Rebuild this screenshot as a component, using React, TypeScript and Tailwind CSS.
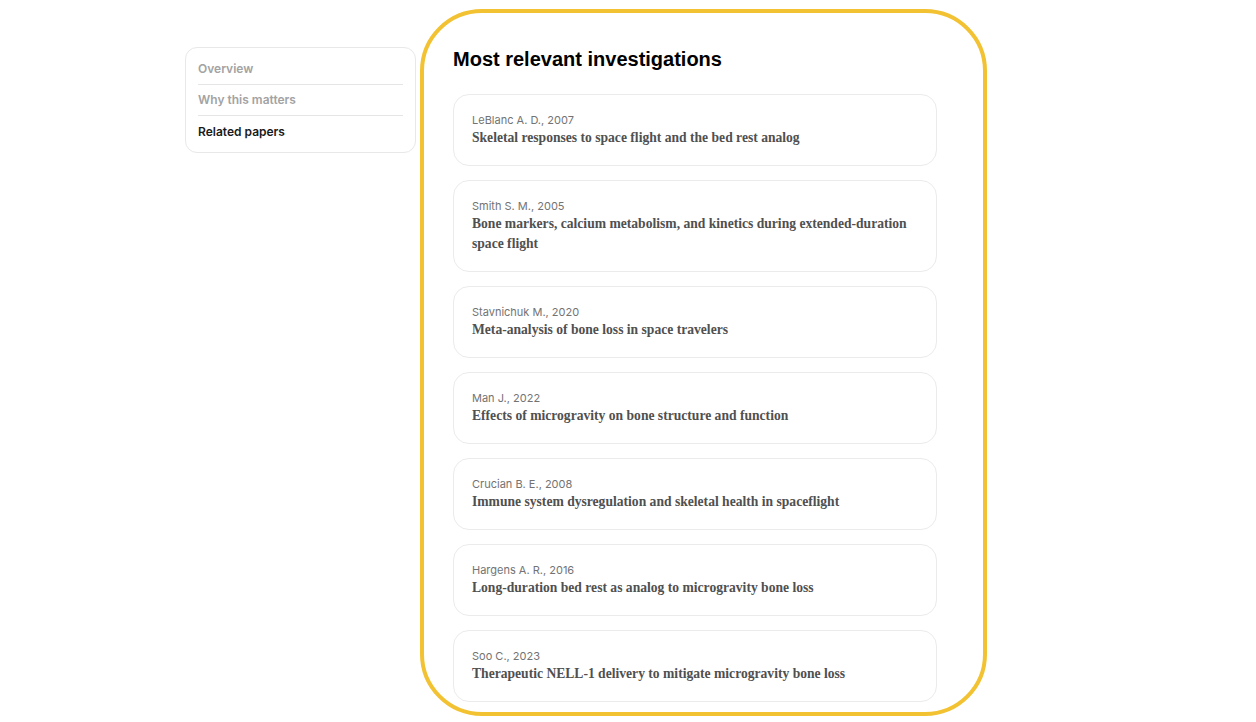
import React from "react";

type Paper = {
  author: string;
  title: string;
};

const papers: Paper[] = [
  { author: "LeBlanc A. D., 2007", title: "Skeletal responses to space flight and the bed rest analog" },
  {
    author: "Smith S. M., 2005",
    title: "Bone markers, calcium metabolism, and kinetics during extended-duration space flight",
  },
  { author: "Stavnichuk M., 2020", title: "Meta-analysis of bone loss in space travelers" },
  { author: "Man J., 2022", title: "Effects of microgravity on bone structure and function" },
  { author: "Crucian B. E., 2008", title: "Immune system dysregulation and skeletal health in spaceflight" },
  { author: "Hargens A. R., 2016", title: "Long-duration bed rest as analog to microgravity bone loss" },
  { author: "Soo C., 2023", title: "Therapeutic NELL-1 delivery to mitigate microgravity bone loss" },
];

const navItems = [
  { label: "Overview", active: false },
  { label: "Why this matters", active: false },
  { label: "Related papers", active: true },
];

function Sidebar() {
  return (
    <aside className="mt-[2px] h-fit w-[231px] shrink-0 rounded-xl border border-[#e8e8e8] bg-white px-[12px] pt-[6px] pb-[5px] font-['Inter',sans-serif]">
      {navItems.map((item, i) => (
        <div
          key={item.label}
          className={
            "flex h-[31px] items-center text-[12px] font-semibold " +
            (i < navItems.length - 1 ? "border-b border-[#e5e5e5] " : "") +
            (item.active ? "text-[#1a1a1a]" : "text-[#a3a3a3]")
          }
        >
          {item.label}
        </div>
      ))}
    </aside>
  );
}

function PaperCard({ paper }: { paper: Paper }) {
  return (
    <div className="rounded-2xl border border-[#ebebeb] bg-white px-[18px] pt-[17px] pb-[17px]">
      <div className="h-[16px] font-['Inter',sans-serif] text-[11px] leading-[16px] text-[#737373]">{paper.author}</div>
      <div className="font-['Liberation_Serif','DejaVu_Serif',serif] text-[13.6px] font-bold leading-[20px] text-[#505050]">
        {paper.title}
      </div>
    </div>
  );
}

export default function App() {
  return (
    <div className="relative min-h-screen bg-white">
      <div className="flex gap-[37px] pl-[185px] pt-[45px]">
        <Sidebar />
        <main className="w-[484px]">
          <h2 className="font-['Liberation_Sans',Arial,sans-serif] text-[20px] font-bold leading-[28px] text-black">
            Most relevant investigations
          </h2>
          <div className="mt-[21px] flex flex-col gap-[14px]">
            {papers.map((p) => (
              <PaperCard key={p.author} paper={p} />
            ))}
          </div>
        </main>
      </div>
      {/* highlight ring drawn over the related papers column */}
      <div className="pointer-events-none absolute left-[420px] top-[9px] h-[707px] w-[567px] rounded-[62px] border-[4px] border-[#f2c232]" />
    </div>
  );
}
